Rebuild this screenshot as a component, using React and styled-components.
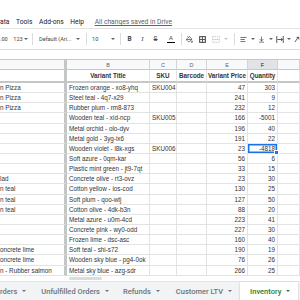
import React from "react";
import styled, { createGlobalStyle } from "styled-components";
import { PaintBucket, AlignLeft, ArrowDownToLine } from "lucide-react";

const GlobalStyle = createGlobalStyle`
  html, body {
    margin: 0;
    padding: 0;
    background: #fff;
  }
  body {
    width: 300px;
    height: 300px;
    overflow: hidden;
    font-family: Roboto, "Liberation Sans", Arial, sans-serif;
  }
`;

const Page = styled.div`
  width: 300px;
  height: 300px;
  display: flex;
  flex-direction: column;
  overflow: hidden;
  background: #fff;
`;

const MenuBar = styled.div`
  height: 28px;
  box-sizing: border-box;
  padding-top: 18px;
  display: flex;
  align-items: flex-start;
  gap: 6.6px;
  font-size: 6.7px;
  line-height: 8px;
  color: #202124;
  white-space: nowrap;
`;

const SaveStatus = styled.span`
  margin-left: 4px;
  color: #5f6368;
  text-decoration: underline;
`;

const Toolbar = styled.div`
  height: 22px;
  box-sizing: border-box;
  border-top: 1px solid #e3e3e3;
  border-bottom: 1px solid #dadce0;
  display: flex;
  align-items: center;
  font-size: 5.6px;
  color: #3c4043;
  white-space: nowrap;
`;

const Tool = styled.div`
  width: ${(p) => p.$w}px;
  flex: none;
  box-sizing: border-box;
  display: flex;
  align-items: center;
  justify-content: ${(p) => p.$justify || "center"};
  padding: ${(p) => p.$pad || "0"};
  color: ${(p) => (p.$disabled ? "#c0c3c7" : "#444746")};
  font-weight: ${(p) => (p.$bold ? 700 : 400)};
  font-style: ${(p) => (p.$italic ? "italic" : "normal")};
  text-decoration: ${(p) => (p.$strike ? "line-through" : "none")};
  font-family: ${(p) => (p.$serif ? '"Liberation Serif", serif' : "inherit")};
  font-size: ${(p) => p.$size || "inherit"};
`;

const Sep = styled.div`
  width: ${(p) => p.$w}px;
  flex: none;
  height: 12px;
  box-sizing: border-box;
  padding-left: ${(p) => p.$at}px;
  &::before {
    content: "";
    display: block;
    width: 1px;
    height: 100%;
    background: #dadce0;
  }
`;

const Caret = styled.span`
  display: inline-block;
  width: 0;
  height: 0;
  border-left: 2px solid transparent;
  border-right: 2px solid transparent;
  border-top: 2px solid ${(p) => (p.$light ? "#c0c3c7" : "#5f6368")};
  margin-left: ${(p) => p.$gap || 0}px;
`;

const ColorA = styled.span`
  display: flex;
  flex-direction: column;
  align-items: center;
  font-size: 6px;
  line-height: 6px;
  &::after {
    content: "";
    width: 8px;
    height: 1.5px;
    margin-top: 0.5px;
    background: #000;
  }
`;

const FormulaBar = styled.div`
  height: 9px;
  flex: none;
`;

const COLS = "67px 83px 27px 30px 41px 30px 1fr";

const Row = styled.div`
  display: grid;
  grid-template-columns: ${COLS};
  height: ${(p) => p.$h}px;
  flex: none;
  font-family: "Liberation Sans", Arial, sans-serif;
  font-size: 6.3px;
  color: #333;
`;

const HeadRow = styled(Row)`
  box-sizing: border-box;
  border-top: 1px solid #c7c7c7;
  background: #f8f9fa;
  font-size: 5.5px;
  color: #5f6368;
`;

const Cell = styled.div`
  box-sizing: border-box;
  position: relative;
  display: flex;
  align-items: center;
  justify-content: ${(p) =>
    p.$align === "right" ? "flex-end" : p.$align === "center" ? "center" : "flex-start"};
  padding: ${(p) => (p.$flush ? "0 2px 0 0" : "0 2px")};
  border-right: ${(p) => (p.$frozen ? "3px solid #c4c7c5" : "1px solid #e2e3e3")};
  border-bottom: ${(p) => (p.$frozenRow ? "2px solid #c4c7c5" : "1px solid #e2e3e3")};
  font-weight: ${(p) => (p.$bold ? 700 : 400)};
  white-space: nowrap;
  overflow: visible;
  box-shadow: ${(p) => (p.$selected ? "inset 0 0 0 1.5px #1a73e8" : "none")};
  &::after {
    content: "";
    display: ${(p) => (p.$selected ? "block" : "none")};
    position: absolute;
    right: -2px;
    bottom: -2px;
    width: 3px;
    height: 3px;
    background: #1a73e8;
    border: 0.5px solid #fff;
    z-index: 2;
  }
`;

const HeadCell = styled(Cell)`
  justify-content: center;
  padding: 0;
  border-right: ${(p) => (p.$frozen ? "3px solid #c4c7c5" : "1px solid #d3d4d5")};
  border-bottom: 1px solid #c7c7c7;
  background: ${(p) => (p.$active ? "#e1e3e6" : "transparent")};
  color: ${(p) => (p.$active ? "#202124" : "#5f6368")};
`;

const ScrollStrip = styled.div`
  flex: 1;
  display: flex;
  align-items: center;
  padding-left: 69px;
`;

const Thumb = styled.div`
  width: 33px;
  height: 2.5px;
  border-radius: 2px;
  background: #dadce0;
`;

const TabBar = styled.div`
  height: 19px;
  flex: none;
  box-sizing: border-box;
  border-top: 1px solid #e3e3e3;
  background: #f1f3f4;
  display: flex;
  align-items: stretch;
  font-size: 7.5px;
  font-weight: 500;
  white-space: nowrap;
`;

const Tab = styled.div`
  display: flex;
  align-items: center;
  gap: 5px;
  padding: 0 ${(p) => p.$right}px 0 ${(p) => p.$left}px;
  color: ${(p) => (p.$active ? "#188038" : "#6f7378")};
  background: ${(p) => (p.$active ? "#fff" : "transparent")};
  box-shadow: ${(p) => (p.$active ? "0 1px 2px rgba(60,64,67,0.3)" : "none")};
  & > span:last-child {
    border-top-color: ${(p) => (p.$active ? "#188038" : "#6f7378")};
  }
`;

const TabEnd = styled.div`
  flex: 1;
  border-left: 1px solid #c7c9cc;
  margin-left: 2px;
`;

const rows = [
  ["n Pizza", "Frozen orange - xo8-yhq", "SKU004", 47, 303],
  ["n Pizza", "Steel teal - 4q7-x29", "", 241, 9],
  ["n Pizza", "Rubber plum - rm8-873", "", 232, 12],
  ["", "Wooden teal - xid-ncp", "SKU005", 166, -5001],
  ["", "Metal orchid - olo-dyv", "", 196, 40],
  ["", "Metal gold - 3yg-ix6", "", 191, 22],
  ["", "Wooden violet - l8k-xgs", "SKU006", 23, -4818],
  ["", "Soft azure - 0qm-kar", "", 56, 6],
  ["", "Plastic mint green - jt9-7qt", "", 33, 15],
  ["lad", "Concrete olive - rt3-ovz", "", 23, 30],
  ["n teal", "Cotton yellow - ios-cod", "", 130, 25],
  ["n teal", "Soft plum - qoo-wtj", "", 127, 50],
  ["n teal", "Cotton olive - 4dk-b3n", "", 88, 20],
  ["", "Metal azure - u0m-4cd", "", 223, 41],
  ["", "Concrete pink - wy0-odd", "", 227, 30],
  ["", "Frozen lime - dsc-asc", "", 160, 40],
  ["oncrete lime", "Soft teal - shi-s72", "", 190, 19],
  ["oncrete lime", "Wooden sky blue - pg4-0ok", "", 76, 26],
  ["n - Rubber salmon", "Metal sky blue - azg-sdr", "", 266, 25],
];

const tabs = [
  { name: "rders", left: 0, right: 5 },
  { name: "Unfulfilled Orders", left: 10, right: 4 },
  { name: "Refunds", left: 10, right: 5 },
  { name: "Customer LTV", left: 11, right: 8 },
  { name: "Inventory", left: 10, right: 8, active: true },
];

const BordersIcon = () => (
  <svg width="7" height="7" viewBox="0 0 8 8">
    <rect x="0.75" y="0.75" width="6.5" height="6.5" fill="none" stroke="#444746" strokeWidth="1.2" />
    <path d="M4 1v6M1 4h6" stroke="#444746" strokeWidth="1" />
  </svg>
);

const MergeIcon = () => (
  <svg width="8" height="7" viewBox="0 0 9 8">
    <path d="M0.6 0.6h7.8v6.8H0.6z" fill="none" stroke="#c0c3c7" strokeWidth="1" strokeDasharray="1.5 1" />
    <path d="M2 4h5M3 3l-1 1 1 1M6 3l1 1-1 1" fill="none" stroke="#c0c3c7" strokeWidth="0.8" />
  </svg>
);

const WrapIcon = () => (
  <svg width="8" height="7" viewBox="0 0 9 8">
    <path d="M0.8 0v8M8.2 0v8M1.5 4h6M5.5 2.3L7.3 4 5.5 5.7" fill="none" stroke="#444746" strokeWidth="1" />
  </svg>
);

const RotateIcon = () => (
  <svg width="7" height="7" viewBox="0 0 8 8">
    <path d="M1 7L5 1M3 1.5h2.5V4" fill="none" stroke="#444746" strokeWidth="1" />
  </svg>
);

const App = () => {
  return (
    <Page>
      <GlobalStyle />
      <MenuBar>
        <span>ata</span>
        <span>Tools</span>
        <span>Add-ons</span>
        <span>Help</span>
        <SaveStatus>All changes saved in Drive</SaveStatus>
      </MenuBar>

      <Toolbar>
        <Tool $w={10} $justify="flex-start">.00</Tool>
        <Tool $w={21}>
          123
          <Caret $gap={1} />
        </Tool>
        <Sep $w={6} $at={1} />
        <Tool $w={48} $justify="space-between" $pad="0 5px 0 2px">
          Default (Ari...
          <Caret />
        </Tool>
        <Sep $w={6} $at={1} />
        <Tool $w={27} $justify="space-between" $pad="0 3px 0 1px">
          10
          <Caret />
        </Tool>
        <Sep $w={5} $at={2} />
        <Tool $w={13} $bold $size="6.5px">B</Tool>
        <Tool $w={13} $italic $serif $size="7px">I</Tool>
        <Tool $w={13} $strike $size="6.5px">S</Tool>
        <Tool $w={18}>
          <ColorA>A</ColorA>
        </Tool>
        <Sep $w={3} $at={1} />
        <Tool $w={13}>
          <PaintBucket size={7} strokeWidth={2.4} />
        </Tool>
        <Tool $w={13}>
          <BordersIcon />
        </Tool>
        <Tool $w={13}>
          <MergeIcon />
        </Tool>
        <Tool $w={8}>
          <Caret $light />
        </Tool>
        <Sep $w={8} $at={4} />
        <Tool $w={11}>
          <AlignLeft size={7} strokeWidth={2.6} />
        </Tool>
        <Tool $w={7}>
          <Caret />
        </Tool>
        <Tool $w={11}>
          <ArrowDownToLine size={7} strokeWidth={2.4} />
        </Tool>
        <Tool $w={7}>
          <Caret />
        </Tool>
        <Tool $w={11}>
          <WrapIcon />
        </Tool>
        <Tool $w={7}>
          <Caret />
        </Tool>
        <Tool $w={11}>
          <RotateIcon />
        </Tool>
      </Toolbar>

      <FormulaBar />

      <HeadRow $h={11}>
        <HeadCell $frozen />
        <HeadCell>B</HeadCell>
        <HeadCell>C</HeadCell>
        <HeadCell>D</HeadCell>
        <HeadCell>E</HeadCell>
        <HeadCell $active>F</HeadCell>
        <HeadCell />
      </HeadRow>

      <Row $h={13}>
        <Cell $frozen $frozenRow />
        <Cell $frozenRow $bold $align="center">Variant Title</Cell>
        <Cell $frozenRow $bold $align="center">SKU</Cell>
        <Cell $frozenRow $bold $align="center">Barcode</Cell>
        <Cell $frozenRow $bold $align="center">Variant Price</Cell>
        <Cell $frozenRow $bold $align="center">Quantity</Cell>
        <Cell $frozenRow />
      </Row>

      {rows.map((r, idx) => (
        <Row key={idx} $h={10.15}>
          <Cell $frozen $flush>{r[0]}</Cell>
          <Cell>{r[1]}</Cell>
          <Cell>{r[2]}</Cell>
          <Cell />
          <Cell $align="right">{r[3]}</Cell>
          <Cell $align="right" $selected={idx === 6}>
            {r[4]}
          </Cell>
          <Cell />
        </Row>
      ))}

      <ScrollStrip>
        <Thumb />
      </ScrollStrip>

      <TabBar>
        {tabs.map((t) => (
          <Tab key={t.name} $left={t.left} $right={t.right} $active={t.active}>
            {t.name}
            <Caret />
          </Tab>
        ))}
        <TabEnd />
      </TabBar>
    </Page>
  );
};

export default App;
